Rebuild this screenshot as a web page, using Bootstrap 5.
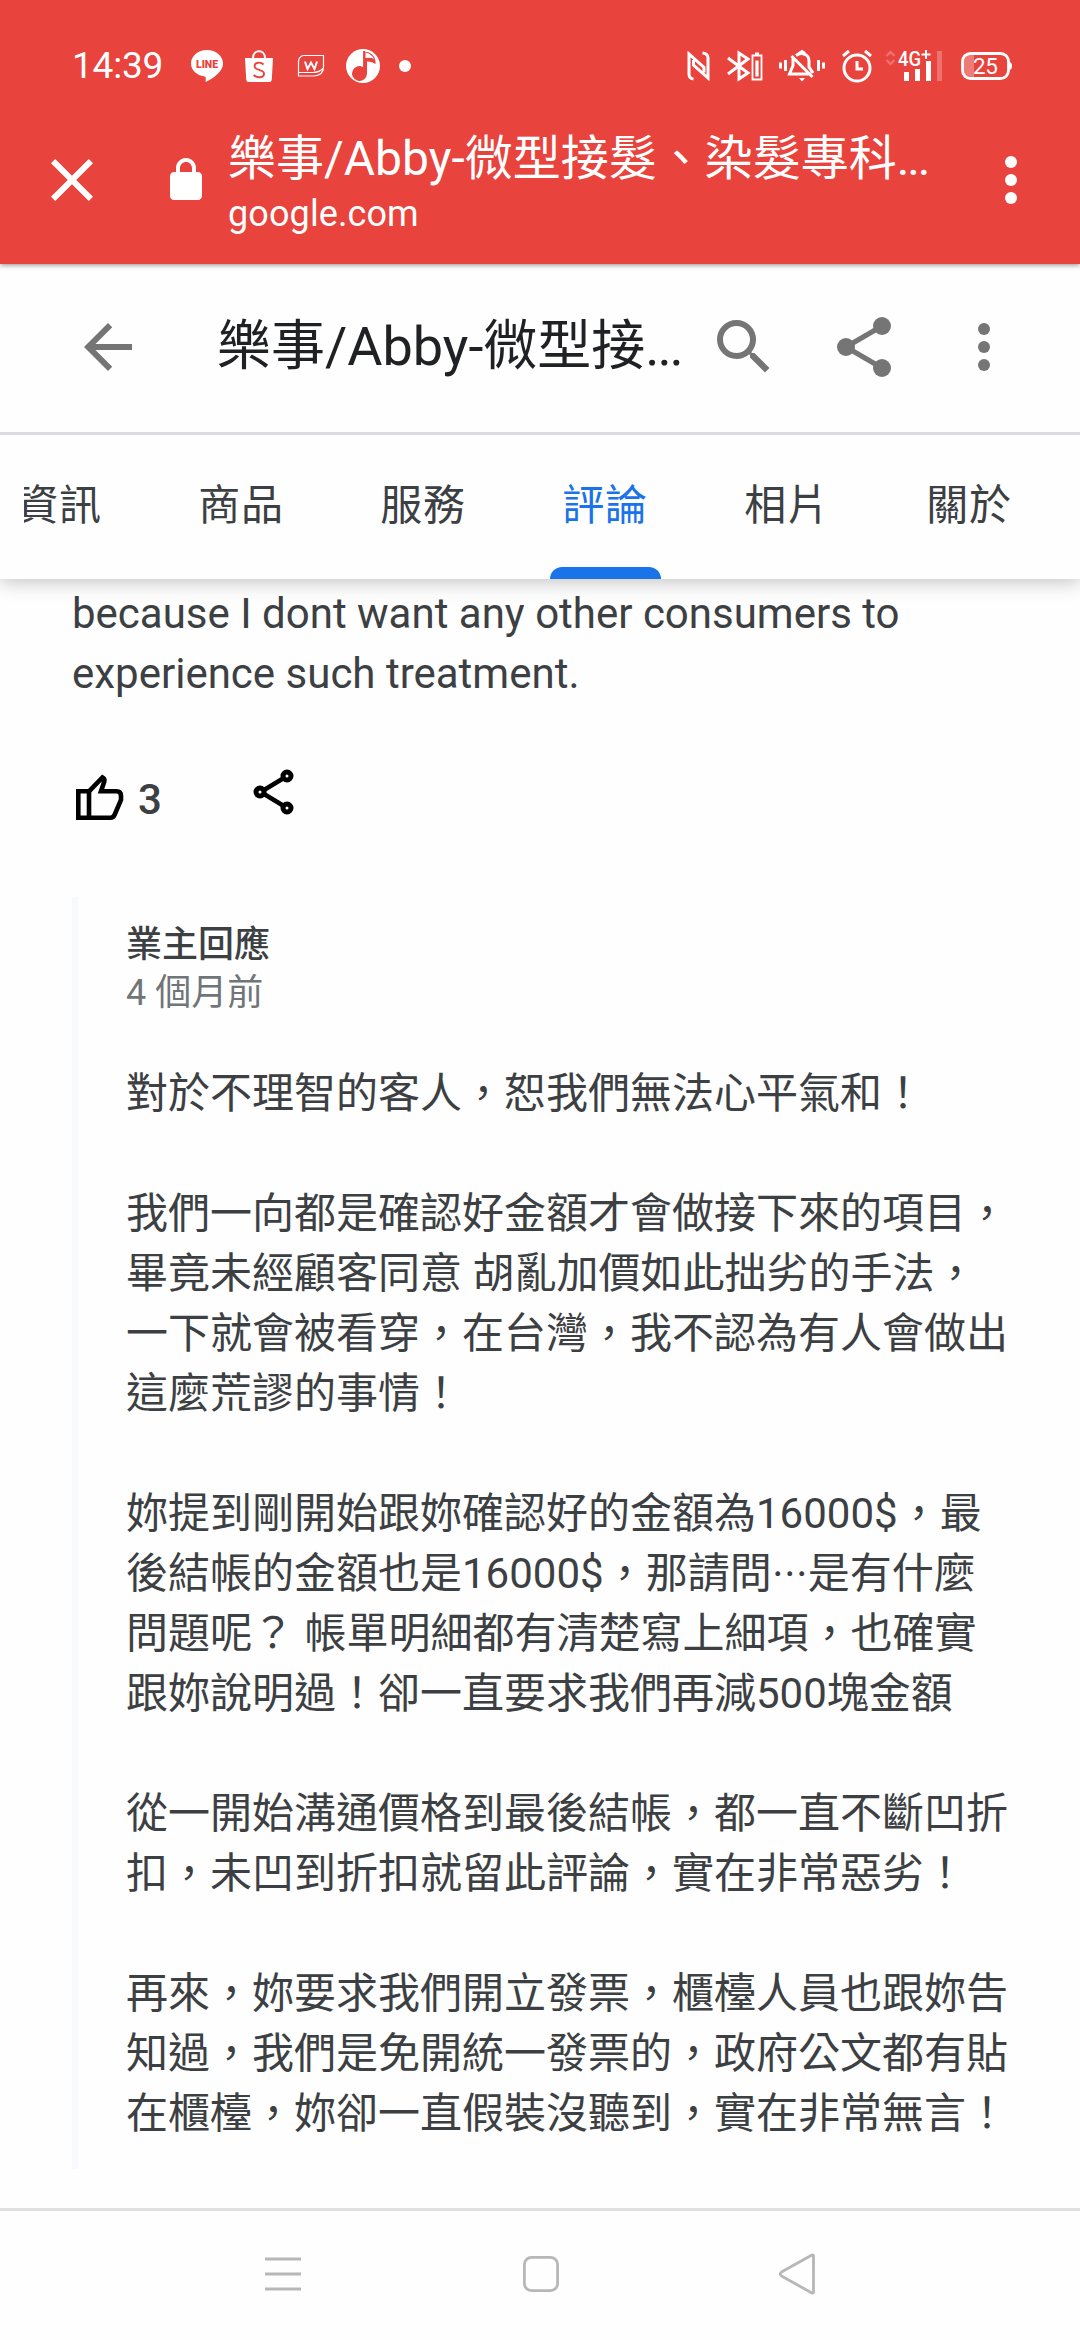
<!DOCTYPE html>
<html lang="zh-Hant">
<head>
<meta charset="utf-8">
<meta name="viewport" content="width=device-width, initial-scale=1">
<title>樂事/Abby</title>
<link href="https://cdn.jsdelivr.net/npm/bootstrap@5.3.0/dist/css/bootstrap.min.css" rel="stylesheet">
<style>
body{width:1080px;height:2340px;overflow:hidden;background:#fefefe;color:#3c4043;font-family:Roboto,"Noto Sans CJK TC",sans-serif;font-size:42px;line-height:60px}
svg{display:block;flex:none}
.top-area{height:264px;background:#e8433d;box-shadow:0 1px 5px rgba(0,0,0,.45);z-index:4}
.status-row{height:132px;padding-left:72px}
.clock{font-size:37px;width:90px;letter-spacing:-.2px;white-space:nowrap}
.tab-title{font-size:48px;line-height:60px;margin-top:-3px}
.tab-host{font-size:36px;line-height:48px;letter-spacing:.1px;margin-top:1px}
.url-row{height:132px;padding-left:36px}
.url-text{width:720px;margin-left:18px}
.dots3{letter-spacing:-2.2px}
.place-head{height:171px;background:#fefefe;border-bottom:3px solid #dadce0;padding:0 60px 3px 72px;z-index:3}
.place-name{font-size:54px;line-height:72px;color:#202124;margin-left:73px;width:485px}
.tabs-wrap{height:144px;background:#fefefe;padding-left:24px;box-shadow:0 3px 18px rgba(0,0,0,.24);z-index:2}
.tabs-clip{overflow:hidden;height:144px}
.tabs-clip .nav-item{width:182px;flex:none}
.tabs-clip .nav-item:first-child{margin-left:-56px}
.tabs-clip .nav-link{color:#3c4043;padding:41px 0 0;height:144px;letter-spacing:.75px;text-align:center;border:0}
.tabs-clip .nav-link.active{color:#1a73e8}
.tab-bar{width:111px;height:12px;background:#1a73e8;border-radius:12px 12px 0 0;margin:31px auto 0}
.review{height:1629px;padding:5px 0 0 72px;overflow:hidden}
.actions{height:193px;padding-top:67px}
.like-count{font-weight:500;margin:-1px 0 0 10px}
.reply{height:1272px;border-left:6px solid #f8f9fc;padding:24px 0 0 48px}
.reply-head{font-size:36px;line-height:48px}
.reply-body{margin-top:47px;white-space:pre}
.mid-dots{font-size:36px;line-height:1}
.sys-nav{height:132px;border-top:3px solid #e0e0e0;padding-bottom:3px}
</style>
</head>
<body class="d-flex flex-column">
<header class="top-area position-relative text-white flex-shrink-0">
  <div class="status-row d-flex align-items-center">
    <span class="clock">14:39</span>
    <svg style="margin-left:28px" width="34" height="34" viewBox="0 0 34 34"><path d="M17 1C8 1 1 7 1 14.6c0 6.500 5.500 11.800 13.500 13 1.700.4 1.400 2 1.100 4.400-.1.900.5 1 1.200.6C21 30.500 33 23.500 33 14.600 33 7 26 1 17 1z" fill="#fff"/><text x="17" y="19" text-anchor="middle" font-family="Roboto" font-weight="900" font-size="10.500" fill="#e8433d">LINE</text></svg>
    <svg style="margin-left:20px" width="30" height="34" viewBox="0 0 30 34"><path d="M1 9h28l-1.200 21.500q-.1 2.500-2.600 2.500H4.800q-2.500 0-2.600-2.500z" fill="#fff"/><path d="M9 9c0-9 12-9 12 0" fill="none" stroke="#fff" stroke-width="2"/><path d="M19.500 15.500c-3-3-9-2.200-9 1.700 0 4.500 9.500 3 9.500 7.500 0 4-6.500 5-10.300 1.300" fill="none" stroke="#e8433d" stroke-width="1.900"/></svg>
    <svg style="margin-left:23px" width="28" height="24" viewBox="0 0 28 24"><path d="M6 1.500h20.500V13q0 8-9 9H1.500V8q0-5 4.500-6.500zM2 18.500h14q6 0 10-4" fill="none" stroke="#fff" stroke-width="1.200"/><path d="M8 7.500l2.500 7.500 3.500-6.500 3.500 6.500 2.500-7.500" fill="none" stroke="#fff" stroke-width="2"/></svg>
    <svg style="margin-left:20px" width="36" height="36" viewBox="0 0 36 36"><circle cx="18" cy="18" r="17" fill="#fff"/><path d="M19 3v21" stroke="#e8433d" stroke-width="1.800"/><path d="M19 3.500q10 .5 11.500 9.500v3q-4-3-8.500-2.500v12a7.500 7.500 0 1 1-3-6z" fill="#e8433d"/><path d="M20.500 4.500q6 1 8.500 6.500-3-2-8.500-1z" fill="#fff"/></svg>
    <svg style="margin-left:17px" width="14" height="14"><circle cx="7" cy="7" r="6" fill="#fff"/></svg>
    <svg style="margin-left:275px" width="24" height="30" viewBox="0 0 24 30" fill="none" stroke="#fff" stroke-width="3"><path d="M6.500 28Q2 27.500 2 23V3l15 13.500v5M15.500 2Q21 2.500 21 7v20L6.500 14V9"/></svg>
    <svg style="margin-left:15px" width="38" height="32" viewBox="0 0 38 32" fill="none" stroke="#fff"><path d="M2 8l20 15-9 6V3l9 6L2 24" stroke-width="3"/><path d="M26.500 5.500h9v24h-9zM29 3.500h4" stroke-width="1.800"/><path d="M31 10.500v16" stroke-width="3.200"/></svg>
    <svg style="margin-left:14px" width="48" height="34" viewBox="0 0 48 34" fill="none" stroke="#fff" stroke-width="3"><path d="M2.500 13.500v6M7.500 11v11M40.500 11v11M45.500 13.500v6"/><path d="M15 9.500v7L11.500 25H33M13.500 7l21 21M18 6.500C23 2.500 31 5 31 12v6l4 6M21 4.500l3-2 3 2" stroke-width="3"/><path d="M21 29h6l-3 3.500z" fill="#fff" stroke="none"/></svg>
    <svg style="margin-left:15px" width="32" height="34" viewBox="0 0 32 34" fill="none" stroke="#fff" stroke-width="3"><circle cx="16" cy="19" r="13"/><path d="M16 12v8h6M2 7l6-5M30 7l-6-5"/></svg>
    <svg style="margin-left:12px" width="58" height="36" viewBox="0 0 58 36"><path d="M1.500 8L5.500 4l4 4M1.500 12l4 4 4-4" fill="none" stroke="#fff" stroke-opacity=".25" stroke-width="2.400"/><text x="13" y="17.500" font-family="Roboto" font-weight="500" font-size="20" textLength="23" lengthAdjust="spacingAndGlyphs" fill="#fff">4G</text><path d="M36.500 6.500h9M41 2v9" stroke="#fff" stroke-width="2"/><path d="M21.500 24v9M32.500 21v12M43.500 13v20" stroke="#fff" stroke-width="5"/><path d="M54.500 3v30" stroke="#fff" stroke-opacity=".25" stroke-width="5"/></svg>
    <svg style="margin-left:16px" width="54" height="32" viewBox="0 0 54 32"><path d="M4 6q3-3 11-2.500v25Q7 29 4 26z" fill="#fff" fill-opacity=".3"/><rect x="3.500" y="3.500" width="46" height="25" rx="8" fill="none" stroke="#fff" stroke-width="2.800"/><path d="M50 12q3 0 3 4t-3 4z" fill="#fff"/><text x="14" y="24" font-family="Roboto" font-size="22.500" textLength="25" fill="#fff">25</text></svg>
  </div>
  <div class="url-row d-flex">
    <svg style="margin-top:12px" width="72" height="72" viewBox="0 0 24 24"><path fill="#fff" d="M19 6.410 17.590 5 12 10.590 6.410 5 5 6.410 10.590 12 5 17.590 6.410 19 12 13.410 17.590 19 19 17.590 13.410 12z"/></svg>
    <svg style="margin:24px 0 0 54px" width="48" height="48" viewBox="0 0 24 24"><path fill="#fff" d="M18 8h-1V6c0-2.760-2.240-5-5-5S7 3.240 7 6v2H6c-1.100 0-2 .9-2 2v10c0 1.100.9 2 2 2h12c1.100 0 2-.9 2-2V10c0-1.100-.9-2-2-2zM9 8V6c0-1.660 1.340-3 3-3s3 1.340 3 3v2z"/></svg>
    <div class="url-text"><div class="tab-title text-nowrap">樂事/Abby-微型接髮、染髮專科<span class="dots3">...</span></div><div class="tab-host">google.com</div></div>
    <svg style="margin:12px 0 0 27px" width="72" height="72" viewBox="0 0 24 24" fill="#fff"><circle cx="12" cy="6" r="2"/><circle cx="12" cy="12" r="2"/><circle cx="12" cy="18" r="2"/></svg>
  </div>
</header>
<div class="place-head position-relative d-flex align-items-center flex-shrink-0">
  <svg width="72" height="72" viewBox="0 0 24 24" fill="#757575"><path d="M20 11H7.830l5.590-5.590L12 4l-8 8 8 8 1.410-1.410L7.830 13H20z"/></svg>
  <div class="place-name text-nowrap">樂事/Abby-微型接<span class="dots3">...</span></div>
  <svg style="margin-left:6px" width="72" height="72" viewBox="0 0 24 24" fill="#757575"><path d="M15.500 14h-.79l-.28-.27A6.470 6.470 0 0 0 16 9.500 6.500 6.500 0 1 0 9.500 16c1.610 0 3.090-.59 4.230-1.570l.27.28v.79l5 4.990L20.490 19zm-6 0C7.010 14 5 11.990 5 9.500S7.010 5 9.500 5 14 7.010 14 9.500 11.990 14 9.500 14z"/></svg>
  <svg style="margin-left:48px" width="72" height="72" viewBox="0 0 24 24" fill="#757575"><path d="M6 12 18 5M6 12l12 7" stroke="#757575" stroke-width="1.700"/><circle cx="6" cy="12" r="3"/><circle cx="18" cy="5" r="3"/><circle cx="18" cy="19" r="3"/></svg>
  <svg style="margin-left:48px" width="72" height="72" viewBox="0 0 24 24" fill="#757575"><circle cx="12" cy="6" r="2"/><circle cx="12" cy="12" r="2"/><circle cx="12" cy="18" r="2"/></svg>
</div>
<nav class="tabs-wrap position-relative flex-shrink-0">
  <ul class="tabs-clip nav flex-nowrap">
    <li class="nav-item"><a class="nav-link">資訊</a></li>
    <li class="nav-item"><a class="nav-link">商品</a></li>
    <li class="nav-item"><a class="nav-link">服務</a></li>
    <li class="nav-item"><a class="nav-link active">評論<div class="tab-bar"></div></a></li>
    <li class="nav-item"><a class="nav-link">相片</a></li>
    <li class="nav-item"><a class="nav-link">關於</a></li>
  </ul>
</nav>
<main class="review flex-shrink-0">
  <div class="text-nowrap">because I dont want any other consumers to<br>experience such treatment.</div>
  <div class="actions d-flex">
    <svg style="margin:2px 0 0 2px" width="54" height="50" viewBox="0 0 54 50" fill="none" stroke="#000" stroke-width="4.600"><path d="M4.300 18.300H15v26.400H4.300z"/><path d="M15 18.300 28.500 4.500q2.500 1.500 1.800 4L27 18.300h15.500q4.500 0 4.500 4.500v4L40.500 42q-1.200 2.700-4 2.700H15"/></svg>
    <span class="like-count">3</span>
    <svg style="margin:-4px 0 0 90px" width="46" height="50" viewBox="0 0 46 50" fill="none" stroke="#000" stroke-width="5"><circle cx="8" cy="25" r="4"/><circle cx="35" cy="9" r="4"/><circle cx="35" cy="41" r="4"/><path d="M12 23 31 11.500M12 27l19 11.500" stroke-width="4.400"/></svg>
  </div>
  <section class="reply">
    <div class="reply-head" style="font-weight:500">業主回應</div>
    <div class="reply-head" style="color:#70757a">4 個月前</div>
    <div class="reply-body">對於不理智的客人，恕我們無法心平氣和！

我們一向都是確認好金額才會做接下來的項目，
畢竟未經顧客同意 胡亂加價如此拙劣的手法，
一下就會被看穿，在台灣，我不認為有人會做出
這麼荒謬的事情！

妳提到剛開始跟妳確認好的金額為16000$，最
後結帳的金額也是16000$，那請問<span class="mid-dots">⋯</span>是有什麼
問題呢？ 帳單明細都有清楚寫上細項，也確實
跟妳說明過！卻一直要求我們再減500塊金額

從一開始溝通價格到最後結帳，都一直不斷凹折
扣，未凹到折扣就留此評論，實在非常惡劣！

再來，妳要求我們開立發票，櫃檯人員也跟妳告
知過，我們是免開統一發票的，政府公文都有貼
在櫃檯，妳卻一直假裝沒聽到，實在非常無言！</div>
  </section>
</main>
<footer class="sys-nav d-flex justify-content-center align-items-center flex-shrink-0">
  <svg width="40" height="44" viewBox="0 0 40 44" stroke="#b7b7b7" stroke-width="3"><path d="M2 7h36M2 22h36M2 37h36"/></svg>
  <svg style="margin:0 216px 0 218px" width="40" height="44" viewBox="0 0 40 44" fill="none" stroke="#b7b7b7" stroke-width="2.800"><rect x="3.400" y="5.400" width="33.200" height="33.200" rx="7"/></svg>
  <svg width="40" height="44" viewBox="0 0 40 44" fill="none" stroke="#b7b7b7" stroke-width="2.800" stroke-linejoin="round"><path d="M36.500 3.500v37q-1 1-2.500 0L4.500 24q-2.500-2 0-4L34 3.500q1.500-1 2.500 0z"/></svg>
</footer>
<script src="https://cdn.jsdelivr.net/npm/bootstrap@5.3.0/dist/js/bootstrap.bundle.min.js"></script>
</body>
</html>
